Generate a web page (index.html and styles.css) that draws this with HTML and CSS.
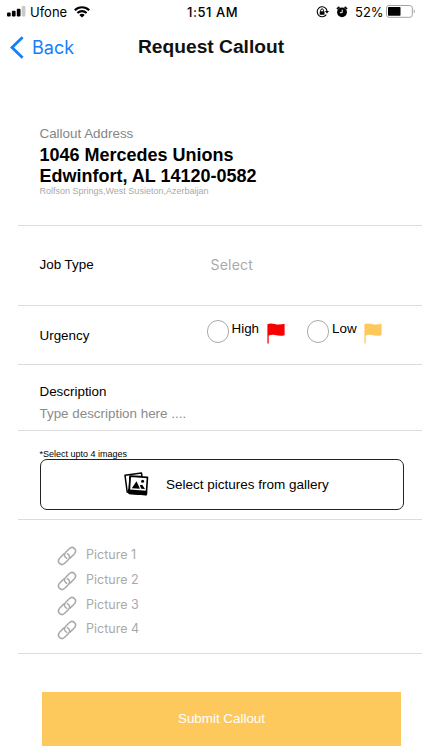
FILE: index.html
```html
<!DOCTYPE html>
<html lang="en">
<head>
<meta charset="utf-8">
<title>Request Callout</title>
<link rel="stylesheet" href="styles.css">
</head>
<body>
<svg width="0" height="0" class="defs">
  <symbol id="link" viewBox="0 0 20 20">
    <g fill="none" stroke="#a9a9a9" stroke-width="1.500" stroke-linecap="round">
      <path d="M9.700 12.300C7.300 11 6.700 8.400 8.500 6.500L12 2.900C13.800 1.100 16 1.100 17.500 2.600C19 4.100 18.800 6.300 17.200 8L13.300 11.900"/>
      <path d="M10.300 7.700C12.700 9 13.300 11.600 11.500 13.500L8 17.100C6.200 18.900 4 18.900 2.500 17.400C1 15.900 1.200 13.700 2.800 12L6.700 8.100"/>
    </g>
  </symbol>
  <symbol id="flag" viewBox="0 0 18 21">
    <path d="M.4 1.2C2.8-.1 5 .4 7.600 1C11 1.800 14.200 1.600 17.600.8V12.200C14 13.200 11 12.600 8 12C5.500 11.500 3.800 11.700 1.700 12.400V20.500H.4Z" fill="currentColor"/>
  </symbol>
</svg>
<header>
  <div class="status">
    <svg class="signal" width="19" height="11" viewBox="0 0 19 11"><rect x="0" y="6.500" width="3.700" height="4" rx="1"/><rect x="4.900" y="4.800" width="3.700" height="5.700" rx="1"/><rect x="9.800" y="2.800" width="3.700" height="7.700" rx="1"/><rect x="14.700" y="0" width="3.700" height="10.500" rx="1" fill="#c9c9c9"/></svg>
    <span class="carrier">Ufone</span>
    <svg class="wifi" width="16" height="12" viewBox="0 0 16 12"><g fill="none" stroke="#000" stroke-width="2.100"><path d="M.8 4.300C4.800.3 11.200.3 15.200 4.300"/><path d="M3.400 7C6 4.500 10 4.500 12.600 7"/></g><path d="M5.300 8.900C6.800 7.500 9.200 7.500 10.700 8.900L8 11.600Z"/></svg>
    <span class="time">1:51 AM</span>
    <svg class="lock" width="13" height="12" viewBox="0 0 13 12"><path d="M10.200 2.800A5 5 0 1 0 10.300 8.600" fill="none" stroke="#000" stroke-width="1.100"/><path d="M8.900 5H13L11 7.600Z"/><path d="M10.200 2.800Q11 4 11 5.500" fill="none" stroke="#000" stroke-width="1.100"/><rect x="3.700" y="5.300" width="4.800" height="3.500" rx=".4"/><path d="M4.700 5.500V4.300A1.400 1.400 0 0 1 7.500 4.300V5.500" fill="none" stroke="#000"/></svg>
    <svg class="alarm" width="12" height="12" viewBox="0 0 12 12"><circle cx="6" cy="6.300" r="4.900"/><path d="M.9 2.900L3.400 1M11.100 2.900L8.600 1" stroke="#000" stroke-width="1.600"/><path d="M6.200 3.700V6.700H3.900" fill="none" stroke="#fff"/></svg>
    <span class="percent">52%</span>
    <svg class="battery" width="30" height="13" viewBox="0 0 30 13"><rect x=".5" y=".5" width="25.800" height="11.800" rx="2.500" fill="#fff" stroke="#a3a3a3"/><rect x="2" y="2" width="12.500" height="8.800" rx=".8"/><path d="M27.700 4.300Q30 6.400 27.700 8.500Z" fill="#a3a3a3"/></svg>
  </div>
  <nav>
    <a class="back"><svg width="14" height="23" viewBox="0 0 14 23"><path d="M12.600 1.200L2 11.500L12.600 21.800" fill="none" stroke="#157efb" stroke-width="2.800"/></svg><span>Back</span></a>
    <h1>Request Callout</h1>
  </nav>
</header>
<main>
  <section class="address">
    <div class="label">Callout Address</div>
    <h2>1046 Mercedes Unions<br>Edwinfort, AL 14120-0582</h2>
    <div class="region">Rolfson Springs,West Susieton,Azerbaijan</div>
  </section>
  <section class="job"><span class="name">Job Type</span><span class="select">Select</span></section>
  <section class="urgency">
    <span class="name">Urgency</span>
    <div class="choice high"><i class="radio"></i><span>High</span><svg class="flag" width="18" height="21"><use href="#flag"/></svg></div>
    <div class="choice low"><i class="radio"></i><span>Low</span><svg class="flag" width="18" height="21"><use href="#flag"/></svg></div>
  </section>
  <section class="description"><div>Description</div><div class="hint">Type description here ....</div></section>
  <section class="gallery">
    <div class="note">*Select upto 4 images</div>
    <button class="pick">
      <svg width="25" height="25" viewBox="0 0 25 25"><path d="M1 3.300L17.500 1L18 4.500L6 4.200L5 20.500L3.200 20Z" fill="#fff" stroke="#000" stroke-width="1.500" stroke-linejoin="round"/><path d="M4 18L5.500 21.500L22.500 23L22.700 20L5 17Z" stroke="#000" stroke-linejoin="round"/><path d="M6.300 4.300L23.500 5.400L22.300 22.500L5.100 21.400Z" fill="#fff" stroke="#000" stroke-width="1.600" stroke-linejoin="round"/><path d="M5.300 17.600L22.600 18.800L22.300 22.400L5.100 21.300Z"/><path d="M7.800 16.200L12.500 9.300L16 16.700ZM15.800 13.200L18.200 12.700L21 17L17.300 16.800Z"/><circle cx="18.600" cy="9.200" r="1.500"/></svg>
      <span>Select pictures from gallery</span>
    </button>
  </section>
  <section class="pictures">
    <div class="picture"><svg width="20" height="20"><use href="#link"/></svg><span>Picture 1</span></div>
    <div class="picture"><svg width="20" height="20"><use href="#link"/></svg><span>Picture 2</span></div>
    <div class="picture"><svg width="20" height="20"><use href="#link"/></svg><span>Picture 3</span></div>
    <div class="picture"><svg width="20" height="20"><use href="#link"/></svg><span>Picture 4</span></div>
  </section>
</main>
<button class="submit">Submit Callout</button>
</body>
</html>
```
FILE: styles.css
```css
* { box-sizing: border-box; }
body { margin: 0; width: 422px; height: 750px; overflow: hidden; background: #fff; color: #000; font: 13.4px/16px "Liberation Sans", Arial, sans-serif; }
svg { display: block; flex: none; }
span { white-space: nowrap; }
.defs { position: absolute; }
header { height: 98px; }
.status { display: flex; height: 24px; padding-left: 7px; font: 13px/24px Inter, sans-serif; }
.signal { margin-top: 6px; }
.carrier { width: 41px; margin-left: 4px; }
.wifi { margin: 6px 0 0 3px; }
.time { width: 57px; margin-left: 97px; font-weight: 500; letter-spacing: .55px; }
.lock { margin: 6px 0 0 72px; }
.alarm { margin: 6px 0 0 7px; }
.percent { width: 29px; margin-left: 7px; }
.battery { margin: 5px 0 0 2px; }
nav { display: grid; grid-template-columns: 138px 1fr; height: 46px; align-items: center; }
.back { display: flex; align-items: center; padding-left: 10px; gap: 8px; color: #157efb; font: 18px/24px Inter, sans-serif; }
.back span { padding-top: 1px; }
h1 { margin: 0; font-size: 19.2px; line-height: 24px; color: #111; }
main { margin-left: 18px; }
section { border-bottom: 1px solid #dcdcdc; padding-left: 21.5px; }
.address { height: 128px; padding-top: 28px; }
.label { color: #858585; }
h2 { margin: 3px 0 0; font-size: 18px; line-height: 21px; }
.region { margin-top: -2px; font-size: 9px; line-height: 12px; color: #aaa; }
.job { display: flex; height: 80px; align-items: center; padding-bottom: 1px; }
.name { width: 171px; }
.select { color: #aaa; font: 14px/16px Inter, sans-serif; letter-spacing: .2px; }
.urgency { display: flex; height: 59px; padding-top: 14px; }
.urgency .name { width: 167px; padding-top: 8px; }
.choice { display: flex; width: 100px; }
.radio { width: 22.500px; height: 22.500px; border: 1px solid #aaa; border-radius: 50%; }
.choice span { width: 38px; padding-left: 2.500px; margin-top: 1px; }
.flag { margin-top: 3px; }
.high .flag { color: #f70000; }
.low .flag { color: #fdc95c; margin-left: -3px; }
.low span { padding-left: 3px; }
.description { height: 66px; padding-top: 19px; }
.hint { margin-top: 6px; color: #8b8b8b; }
.gallery { height: 89px; padding-top: 18px; }
.note { font-size: 9px; line-height: 10px; }
.pick { display: flex; align-items: center; width: 364px; height: 51px; padding: 0 0 0 83.500px; gap: 17px; border: 1.400px solid #222; border-radius: 7px; background: #fff; color: #000; font: inherit; font-size: 13.5px; }
.pictures { height: 134px; padding: 25px 0 0 39px; }
.picture { display: flex; height: 24.800px; align-items: flex-start; gap: 9px; color: #aaa; font: 12.500px/19px Inter, sans-serif; }
.picture svg { margin-top: 1px; }
.submit { display: block; width: 359px; height: 54px; margin: 38px 0 0 42px; padding: 0; border: 0; background: #fdc95c; color: #fff; font: inherit; }
```
